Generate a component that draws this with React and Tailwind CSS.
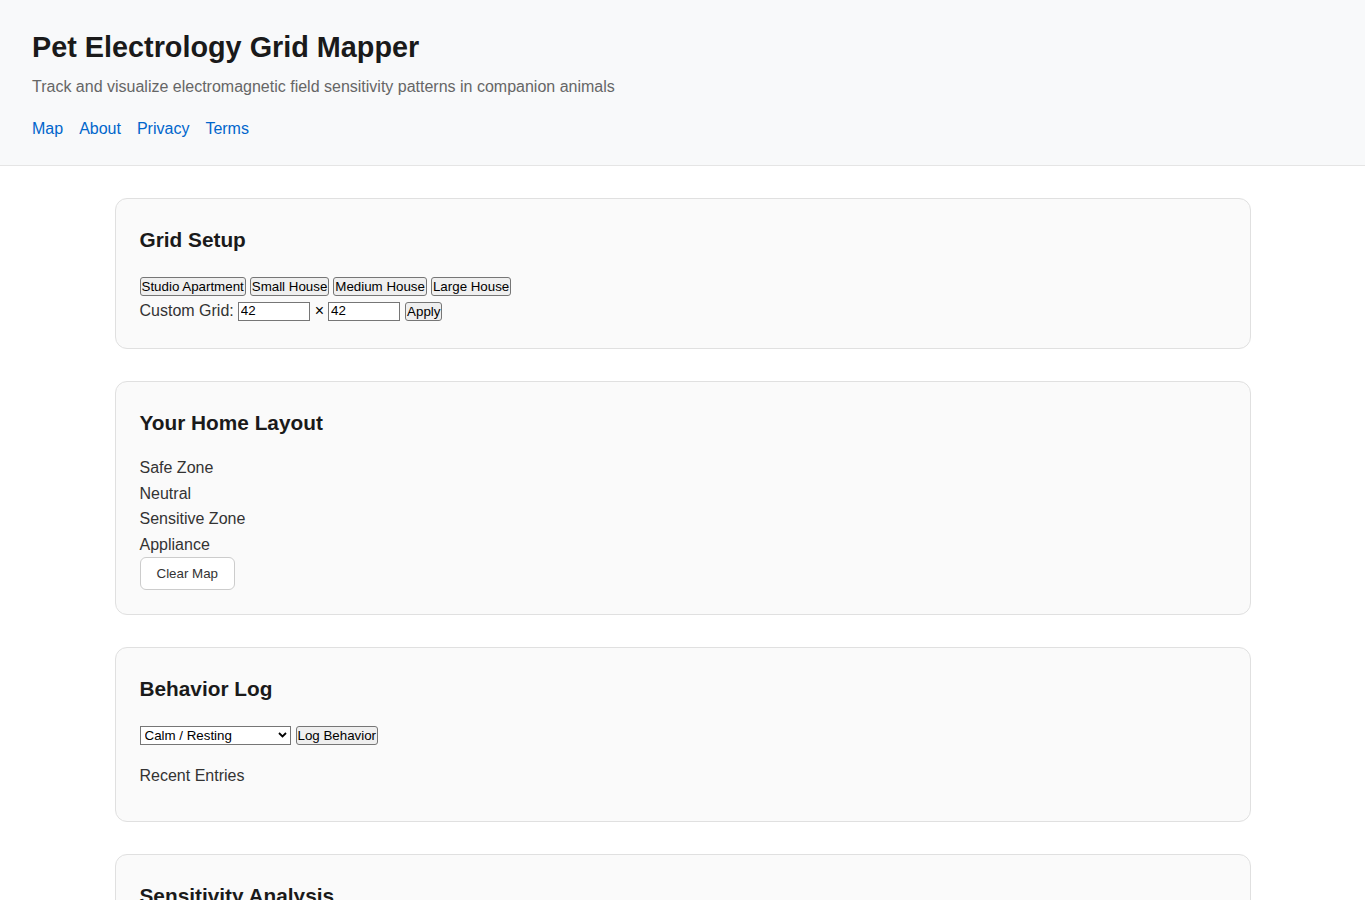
import { useState } from 'react';

const nativeBtn =
  'bg-[#efefef] border border-[#767676] rounded-[3px] px-[1px] py-[1px] text-[13.33px] leading-[15px] text-black';

const presets = ['Studio Apartment', 'Small House', 'Medium House', 'Large House'];
const legend = ['Safe Zone', 'Neutral', 'Sensitive Zone', 'Appliance'];

const Card = ({ title, bottom = 'pb-[25px]', children }) => (
  <section className={`bg-[#fafafa] border border-[#e0e0e0] rounded-xl px-6 pt-[28px] ${bottom}`}>
    <h2 className="text-[20.8px] leading-[25px] font-bold text-[#1a1a1a]">{title}</h2>
    {children}
  </section>
);

const App = () => {
  const [rows, setRows] = useState('42');
  const [cols, setCols] = useState('42');
  const [behavior, setBehavior] = useState('calm');

  return (
    <div className="min-h-screen bg-white text-[#333] font-['Liberation_Sans',Arial,sans-serif]">
      {/* Header */}
      <header className="bg-[#f8f9fa] border-b border-[#e5e5e5] px-8 pt-[31px] pb-6">
        <h1 className="text-[28.8px] leading-[33px] font-bold text-[#1a1a1a]">Pet Electrology Grid Mapper</h1>
        <p className="mt-[11px] leading-6 text-[#666]">
          Track and visualize electromagnetic field sensitivity patterns in companion animals
        </p>
        <nav className="mt-[18px] flex gap-4 leading-6">
          <a href="#" className="text-[#0066cc]">Map</a>
          <a href="#" className="text-[#0066cc]">About</a>
          <a href="#" className="text-[#0066cc]">Privacy</a>
          <a href="#" className="text-[#0066cc]">Terms</a>
        </nav>
      </header>

      <main className="max-w-[1200px] mx-auto px-8 pt-8 flex flex-col gap-8">
        {/* Grid Setup */}
        <Card title="Grid Setup">
          <div className="mt-[25px] flex gap-1">
            {presets.map((p) => (
              <button key={p} className={nativeBtn}>{p}</button>
            ))}
          </div>
          <div className="mt-[3px] flex items-center h-6">
            <span className="mr-1">Custom Grid:</span>
            <input
              value={rows}
              onChange={(e) => setRows(e.target.value)}
              className="w-[72px] h-[19px] border border-[#767676] bg-white px-[2px] text-[13.33px] text-black"
            />
            <span className="ml-[5px] mr-[4px] text-black">×</span>
            <input
              value={cols}
              onChange={(e) => setCols(e.target.value)}
              className="w-[72px] h-[19px] border border-[#767676] bg-white px-[2px] text-[13.33px] text-black"
            />
            <button className={`${nativeBtn} ml-[5px]`}>Apply</button>
          </div>
        </Card>

        {/* Your Home Layout */}
        <Card title="Your Home Layout" bottom="pb-6">
          <ul className="mt-[20px] leading-[25.6px]">
            {legend.map((l) => (
              <li key={l}>{l}</li>
            ))}
          </ul>
          <button className="bg-white border border-[#ccc] rounded-md px-4 py-2 text-[13.33px] leading-[15px] text-[#333]">
            Clear Map
          </button>
        </Card>

        {/* Behavior Log */}
        <Card title="Behavior Log">
          <div className="mt-[25px] flex items-start gap-[5px]">
            <div className="relative flex">
              <select
                value={behavior}
                onChange={(e) => setBehavior(e.target.value)}
                className="appearance-none w-[151px] h-[19px] border border-[#767676] bg-white pl-[4px] text-[13.33px] leading-[15px] text-black"
              >
                <option value="calm">Calm / Resting</option>
                <option value="alert">Alert / Agitated</option>
                <option value="avoid">Avoiding Area</option>
              </select>
              <svg
                className="absolute right-[4px] top-[6px] pointer-events-none"
                width="9"
                height="6"
                viewBox="0 0 9 6"
                fill="none"
                stroke="#000"
                strokeWidth="1.8"
              >
                <path d="M1 1l3.5 3.5L8 1" />
              </svg>
            </div>
            <button className={nativeBtn}>Log Behavior</button>
          </div>
          <h3 className="mt-[19px] mb-[8px] leading-6 font-normal text-[#333]">Recent Entries</h3>
        </Card>

        {/* Sensitivity Analysis */}
        <Card title="Sensitivity Analysis">
          <p className="mt-6 leading-6">Log more behavior entries to see sensitivity patterns.</p>
        </Card>
      </main>
    </div>
  );
};

export default App;
